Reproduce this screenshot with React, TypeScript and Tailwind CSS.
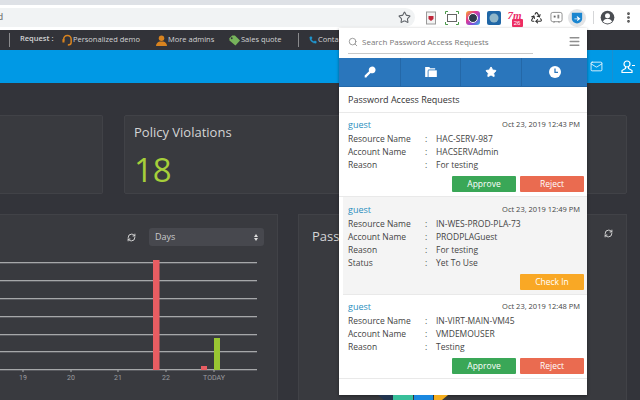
import { Mail, Menu, MoreVertical, Phone, Recycle, RefreshCw, Search, Star } from "lucide-react";
import type { ReactNode } from "react";

const ROW_FONT = "font-['Open_Sans',sans-serif]";

function Slot({ className, children }: { className: string; children: ReactNode }) {
	return <div className={`flex items-center justify-center shrink-0 ${className}`}>{children}</div>;
}

function ExtensionIcons() {
	return (
		<div className="flex items-center h-full ml-[5px]">
			<Slot className="w-[21px]">
				<svg viewBox="0 0 14 14" className="w-[14px] h-[14px]">
					<rect x="2.500" y="1" width="9" height="12" fill="#f3f3f3" stroke="#9a9a9a" />
					<path d="M4.500 5h5v3l-2.500 2-2.500-2z" fill="#c0263a" />
				</svg>
			</Slot>
			<Slot className="w-[21px]">
				<svg viewBox="0 0 14 14" className="w-[14px] h-[14px]" fill="none">
					<rect x="2.500" y="3.500" width="9" height="7" stroke="#666" />
					<path d="M0.500 3V.5H3M11 .5h2.500V3M.5 11v2.500H3M11 13.500h2.500V11" stroke="#4a9a4a" />
				</svg>
			</Slot>
			<Slot className="w-[21px]">
				<svg viewBox="0 0 14 14" className="w-[14px] h-[14px]">
					<rect width="14" height="14" rx="3" fill="url(#rainbow)" />
					<defs>
						<linearGradient id="rainbow" x1="0" y1="0" x2="1" y2="1">
							<stop offset="0" stopColor="#f4b32e" />
							<stop offset="0.35" stopColor="#e8388d" />
							<stop offset="0.7" stopColor="#7b4fe0" />
							<stop offset="1" stopColor="#2fc4d8" />
						</linearGradient>
					</defs>
					<circle cx="7" cy="7" r="4.500" fill="#2d3a4a" stroke="#fff" />
				</svg>
			</Slot>
			<Slot className="w-[21px]">
				<svg viewBox="0 0 14 14" className="w-[14px] h-[14px]">
					<rect width="14" height="14" rx="2" fill="#1f66a6" />
					<circle cx="7" cy="7" r="4.500" fill="#8fb6c9" />
				</svg>
			</Slot>
			<Slot className="w-[23px]">
				<div className="relative w-[16px] h-[16px]">
					<span className="block text-[11px] leading-[11px] font-bold italic text-[#ea2d6b] font-['Liberation_Serif',serif]">7m</span>
					<span className="absolute left-[4px] top-[9px] w-[11px] h-[8px] rounded-[1px] bg-[#ee2d62] text-white text-[6px] leading-[8px] text-center font-['Liberation_Sans',sans-serif]">
						26
					</span>
				</div>
			</Slot>
			<Slot className="w-[19px]">
				<Recycle className="w-[13px] h-[13px] text-[#333]" strokeWidth={2} />
			</Slot>
			<Slot className="w-[20px]">
				<svg viewBox="0 0 14 14" className="w-[13px] h-[13px]" fill="none">
					<rect x="1" y="1.500" width="12" height="10" rx="2" stroke="#8a8a8a" />
					<path d="M4 13l1-2M10 13l-1-2" stroke="#8a8a8a" />
					<rect x="4" y="5" width="2" height="2" fill="#666" />
					<rect x="8" y="4" width="2" height="4" fill="#888" />
				</svg>
			</Slot>
			<Slot className="w-[22px]">
				<div className="w-[18px] h-[18px] rounded-full bg-[#e3e4e6] flex items-center justify-center">
					<svg viewBox="0 0 14 14" className="w-[12px] h-[12px]">
						<path d="M1 1h12v7c0 3-3 5-6 5.500C4 13 1 11 1 8z" fill="#1b86d0" />
						<path d="M4 7.500h4l-1.500-2 1-.5L11 8l-3.500 2.500-.5-1 1-1H4z" fill="#fff" />
					</svg>
				</div>
			</Slot>
			<div className="w-px h-[13px] bg-[#d5d6d8] ml-[5px]" />
			<Slot className="w-[26px]">
				<svg viewBox="0 0 24 24" className="w-[15px] h-[15px]">
					<circle cx="12" cy="12" r="11" fill="#4a4d52" />
					<circle cx="12" cy="9" r="4" fill="#fff" />
					<path d="M4.500 18.500c2-3.500 5-4.500 7.500-4.500s5.500 1 7.500 4.500c-2 2-4.500 3-7.500 3s-5.500-1-7.500-3z" fill="#fff" />
				</svg>
			</Slot>
			<Slot className="w-[16px]">
				<MoreVertical className="w-[13px] h-[13px] text-[#444]" strokeWidth={3} />
			</Slot>
		</div>
	);
}

function NavBar() {
	return (
		<div className={`h-[20px] bg-[#323339] flex items-center text-[7.500px] text-[#d2d3d5] whitespace-nowrap ${ROW_FONT}`}>
			<div className="w-px h-[14px] bg-[#8a8b8e] ml-[9px] mr-[10px]" />
			<span className="w-[31px] mr-[11px] -mt-[2px] font-semibold">Request :</span>
			<svg viewBox="0 0 12 14" className="w-[10px] h-[12px] mr-[1px]" fill="none">
				<path d="M2 8V6a4.500 4.500 0 0 1 9 0v4c0 2-2 3-4 3" stroke="#d8831f" strokeWidth="1.800" />
				<rect x="0.500" y="6" width="2.500" height="4" fill="#d8831f" />
			</svg>
			<span className="w-[65px] mr-[18px]">Personalized demo</span>
			<svg viewBox="0 0 12 12" className="w-[11px] h-[11px] mr-[1px]">
				<circle cx="6" cy="3.500" r="3" fill="#d8831f" />
				<path d="M0 12c0-3 2-4.500 4-5h4c2 .5 4 2 4 5z" fill="#d8831f" />
			</svg>
			<span className="w-[44px] mr-[17px]">More admins</span>
			<svg viewBox="0 0 12 12" className="w-[11px] h-[11px] mr-[1px]">
				<path d="M0.500 3.500 3.500.5h3L12 6l-5 5.500L.5 6z" fill="#77b45b" />
				<circle cx="3" cy="3.500" r="1" fill="#323339" />
			</svg>
			<span className="w-[40px] mr-[17px]">Sales quote</span>
			<div className="w-px h-[14px] bg-[#8a8b8e] mr-[10px]" />
			<Phone className="w-[8px] h-[12px] text-[#2196cf] mr-[1px]" fill="#2196cf" strokeWidth={1} />
			<span>Contact</span>
		</div>
	);
}

function ChartDrawing() {
	const lines = [0, 18, 36, 54, 72, 89, 107];
	const labels = [
		{ x: 23, text: "19" },
		{ x: 71, text: "20" },
		{ x: 118, text: "21" },
		{ x: 166, text: "22" },
		{ x: 214, text: "TODAY" },
	];
	return (
		<svg viewBox="0 -3 278 128" className="w-[278px] h-[128px] mt-[13px] block">
			{lines.map((y) => (
				<rect key={y} x="0" y={y} width="257" height="1.300" fill="#a6a7a9" />
			))}
			<rect x="153" y="-2" width="6.500" height="110" fill="#e85d62" />
			<rect x="201" y="104" width="6" height="4" fill="#e85d62" />
			<rect x="214" y="76" width="6" height="32" fill="#99c632" />
			{labels.map((l) => (
				<g key={l.text}>
					<rect x={l.x - 0.500} y="108" width="1" height="2" fill="#a6a7a9" />
					<text x={l.x} y="118" textAnchor="middle" fontSize="7" fill="#9c9da0" fontFamily="Roboto, sans-serif">
						{l.text}
					</text>
				</g>
			))}
		</svg>
	);
}

function Dashboard() {
	return (
		<div className={`flex-1 min-h-0 bg-[#33343a] pt-[32px] pr-[13px] flex flex-col gap-[20px] overflow-hidden ${ROW_FONT}`}>
			<div className="flex gap-[21px] h-[79px] shrink-0">
				<div className="w-[103px] bg-[#393a3f] border border-l-0 border-[#414247] rounded-r-[2px]" />
				<div className="flex-1 bg-[#393a3f] border border-[#414247] rounded-[2px] pl-[9px] pt-[7px]">
					<div className="text-[13px] leading-[18px] text-[#d4d5d6]">Policy Violations</div>
					<div className="text-[33px] leading-[44px] mt-[7px] font-normal text-[#a6cf3a]">18</div>
				</div>
			</div>
			<div className="flex gap-[20px] flex-1 min-h-0">
				<div className="w-[278px] bg-[#393a3f] border border-l-0 border-b-0 border-[#414247]">
					<div className="flex items-center justify-end pt-[13px] pr-[13px]">
						<RefreshCw className="w-[9px] h-[9px] text-[#dcdcdc] mr-[13px] mt-[1px]" strokeWidth={2.500} />
						<div className="w-[115px] h-[18px] bg-[#47484e] rounded-[3px] flex items-center justify-between px-[6px] text-[9px] text-[#c9cacc]">
							<span>Days</span>
							<span className="flex flex-col gap-[1px]">
								<span className="w-0 h-0 border-x-[2px] border-x-transparent border-b-[3px] border-b-[#dddddd]" />
								<span className="w-0 h-0 border-x-[2px] border-x-transparent border-t-[3px] border-t-[#dddddd]" />
							</span>
						</div>
					</div>
					<ChartDrawing />
				</div>
				<div className="flex-1 bg-[#393a3f] border border-b-0 border-[#414247] pl-[13px] pt-[11px] flex justify-between items-start pr-[13px]">
					<span className="text-[13px] leading-[20px] text-[#d4d5d6]">Password</span>
					<RefreshCw className="w-[9px] h-[9px] text-[#dcdcdc] mt-[3px]" strokeWidth={2.500} />
				</div>
			</div>
		</div>
	);
}

type RequestRowProps = {
	time: string;
	details: [string, string][];
	action: "approve" | "checkin";
	shaded?: boolean;
};

function RequestRow({ time, details, action, shaded }: RequestRowProps) {
	return (
		<div className={`border-b border-[#e9e9e9] pr-[3px] pb-[4px] ${shaded ? "bg-[#f4f4f4] ml-[4px] pl-[5px] pt-[5px]" : "pl-[9px] pt-[4px]"}`}>
			<div className="flex items-center justify-between pr-[4px] h-[15px]">
				<span className="text-[9px] text-[#2b8fbe]">guest</span>
				<span className="text-[7.500px] font-medium text-[#444]">{time}</span>
			</div>
			<div className="mt-[1px]">
				{details.map(([label, value]) => (
					<div key={label} className="flex h-[13px] items-center text-[8.500px] text-[#444]">
						<span className="w-[77px]">{label}</span>
						<span className="w-[11px]">:</span>
						<span>{value}</span>
					</div>
				))}
			</div>
			<div className="flex justify-end gap-[4px] mt-[4px]">
				{action === "approve" ? (
					<>
						<button className="w-[64px] h-[16px] bg-[#3aa757] rounded-[1px] text-white text-[8.500px] font-medium">Approve</button>
						<button className="w-[64px] h-[16px] bg-[#ea6b50] rounded-[1px] text-white text-[8.500px] font-medium">Reject</button>
					</>
				) : (
					<button className="w-[64px] h-[16px] bg-[#f9a825] rounded-[1px] text-white text-[8.500px] font-medium">Check In</button>
				)}
			</div>
		</div>
	);
}

function Popup() {
	return (
		<div className={`absolute left-[339px] top-[28px] w-[248px] h-[367px] bg-white shadow-[0_1px_3px_rgba(0,0,0,0.4)] ${ROW_FONT}`}>
			<div className="h-[30px] pl-[9px] pr-[6px] flex items-start justify-between">
				<div className="w-[185px] h-[23px] mt-[3px] border-b border-[#c9c9c9] flex items-center gap-[4px]">
					<Search className="w-[10px] h-[10px] text-[#8a8a8a]" />
					<span className="text-[8px] text-[#777]">Search Password Access Requests</span>
				</div>
				<Menu className="w-[13px] h-[13px] mt-[7px] text-[#8f8f8f]" strokeWidth={2.500} />
			</div>
			<div className="h-[29px] bg-[#2a76bc] border-b border-[#2468a8] flex items-center">
				<div className="w-[62px] h-full flex items-center justify-center border-r border-[#2468a8]">
					<svg viewBox="0 0 14 14" className="w-[12px] h-[12px]" fill="#fff">
						<path d="M9.500 0.500a4 4 0 1 1-1.800 7.600L3 12.800v.7H.8v-2.400L5.900 6a4 4 0 0 1 3.600-5.500z" />
					</svg>
				</div>
				<div className="w-[60px] h-full flex items-center justify-center border-r border-[#2468a8]">
					<svg viewBox="0 0 14 12" className="w-[12px] h-[10px]" fill="#fff">
						<path d="M0 0h5l1 1.500h6v1.500H4L3 4.500V12H0z" />
						<path d="M4 4h10v8H4z" />
					</svg>
				</div>
				<div className="w-[61px] h-full flex items-center justify-center border-r border-[#2468a8]">
					<Star className="w-[12px] h-[12px] text-white" fill="#fff" />
				</div>
				<div className="flex-1 h-full flex items-center justify-center">
					<svg viewBox="0 0 14 14" className="w-[12px] h-[12px]">
						<circle cx="7" cy="7" r="7" fill="#fff" />
						<path d="M7 3v4.500h3.500" stroke="#2a76bc" strokeWidth="1.500" fill="none" />
					</svg>
				</div>
			</div>
			<div className="h-[26px] pl-[9px] pt-[1px] flex items-center text-[9px] font-medium text-[#333] border-b border-[#e9e9e9]">
				Password Access Requests
			</div>
			<RequestRow
				time="Oct 23, 2019 12:43 PM"
				action="approve"
				details={[
					["Resource Name", "HAC-SERV-987"],
					["Account Name", "HACSERVAdmin"],
					["Reason", "For testing"],
				]}
			/>
			<RequestRow
				shaded
				time="Oct 23, 2019 12:49 PM"
				action="checkin"
				details={[
					["Resource Name", "IN-WES-PROD-PLA-73"],
					["Account Name", "PRODPLAGuest"],
					["Reason", "For testing"],
					["Status", "Yet To Use"],
				]}
			/>
			<RequestRow
				time="Oct 23, 2019 12:48 PM"
				action="approve"
				details={[
					["Resource Name", "IN-VIRT-MAIN-VM45"],
					["Account Name", "VMDEMOUSER"],
					["Reason", "Testing"],
				]}
			/>
		</div>
	);
}

export default function App() {
	return (
		<div className="relative w-[640px] h-[400px] overflow-hidden flex flex-col">
			<div className="h-[5px] bg-[#dee1e6]" />
			<div className="h-[25px] bg-white flex items-center">
				<div className="w-[415px] h-[19px] bg-[#f1f3f4] rounded-r-full shrink-0 flex items-center justify-between pr-[4px]">
					<span className="text-[9px] text-[#666] font-['Liberation_Sans',sans-serif] -ml-[2px]">d</span>
					<Star className="w-[13px] h-[13px] text-[#5f6368]" strokeWidth={2} />
				</div>
				<ExtensionIcons />
			</div>
			<NavBar />
			<div className="h-[33px] bg-[#0099e5] flex justify-end items-center text-white">
				<Mail className="w-[13px] h-[13px] mr-[9px]" strokeWidth={1.500} />
				<div className="w-px h-full bg-[#1a8fd0] mr-[8px]" />
				<svg viewBox="0 0 14 14" className="w-[14px] h-[14px] mr-[5px]" fill="none" stroke="#fff" strokeWidth="1.200">
					<circle cx="6" cy="4" r="3" />
					<path d="M4.500 7v1.500L1 10.500v2h10v-2L7.500 8.500V7M11 5.500h3" />
				</svg>
			</div>
			<Dashboard />
			<Popup />
			{/* donut peeking out under the popup */}
			<svg viewBox="0 0 70 5" className="absolute left-[378px] top-[395px] w-[70px] h-[5px]">
				<path d="M0 0h15v5H6z" fill="#22344f" />
				<rect x="15" width="20" height="5" fill="#38bf9a" />
				<rect x="36" width="19" height="5" fill="#1a88e0" />
				<path d="M56 0h14l-6 5h-8z" fill="#f4ae1f" />
			</svg>
		</div>
	);
}
